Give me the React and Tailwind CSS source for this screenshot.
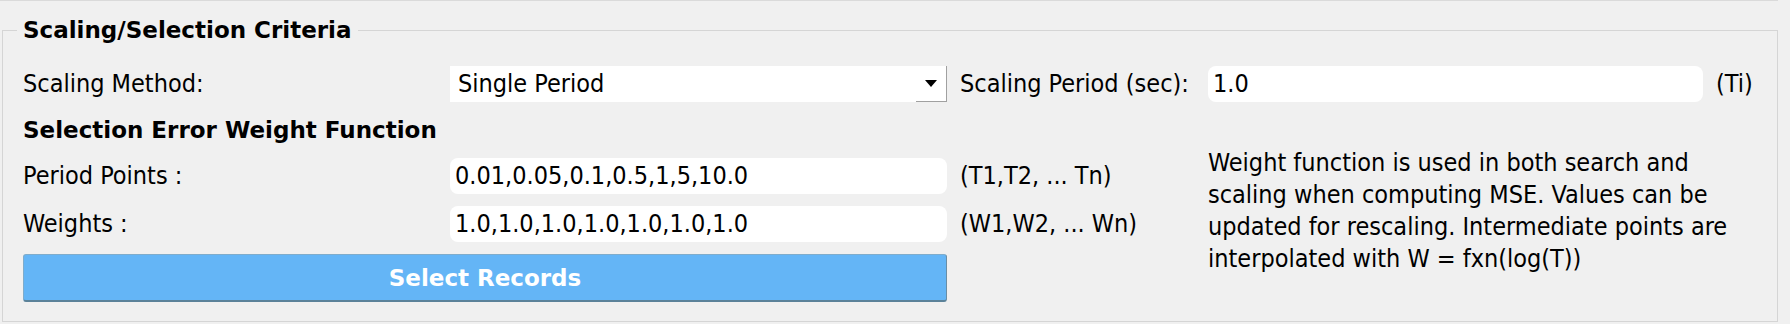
const inputCls = 'h-full w-full bg-white rounded-[8px] pl-[5px] flex items-center';

function Field({ value, className = '' }) {
  return <div className={inputCls + ' ' + className}>{value}</div>;
}

function Combo({ value }) {
  return (
    <div className="col-start-2 row-start-1 h-full w-full bg-white flex items-center">
      <div className="flex-1 pl-[8px]">{value}</div>
      <div className="h-full w-[31px] border-r border-b border-[#a0a0a0] flex items-center justify-center">
        <svg width="12" height="7" viewBox="0 0 12 7"><path d="M0 0h12L6 7z" fill="#000" /></svg>
      </div>
    </div>
  );
}

const bold = "font-bold text-[23px] font-['DejaVu_Sans',sans-serif]";

export default function App() {
  return (
    <div className="w-[1790px] h-[324px] bg-[#f0f0f0] text-black text-[25px] font-['DejaVu_Sans_Condensed','Liberation_Sans',sans-serif]">
      <div className="w-[1778px] border-t border-[#dadada] pt-[12px] pl-[2px]">
        <fieldset className="border border-[#d5d5d5] pb-[19px]">
          <legend className={'ml-[14px] px-[6px] leading-[34px] ' + bold}>Scaling/Selection Criteria</legend>
          <div className="mt-[19px] ml-[20px] grid grid-cols-[414px_497px_235px_495px_1fr] grid-rows-[36px_32px_36px_36px_48px] gap-x-[13px] gap-y-3 items-center leading-[30px]">
            <div className="col-start-1 row-start-1">Scaling Method:</div>
            <Combo value="Single Period" />
            <div className="col-start-3 row-start-1 whitespace-nowrap">Scaling Period (sec):</div>
            <Field className="col-start-4 row-start-1" value="1.0" />
            <div className="col-start-5 row-start-1">(Ti)</div>

            <div className={'col-start-1 row-start-2 col-span-2 whitespace-nowrap ' + bold}>Selection Error Weight Function</div>
            <div className="col-start-4 col-span-2 row-start-2 row-span-4 self-center pt-[5px] leading-[32px] whitespace-nowrap">
              Weight function is used in both search and<br />
              scaling when computing MSE. Values can be<br />
              updated for rescaling. Intermediate points are<br />
              interpolated with W = fxn(log(T))
            </div>

            <div className="col-start-1 row-start-3">Period Points :</div>
            <Field className="col-start-2 row-start-3" value="0.01,0.05,0.1,0.5,1,5,10.0" />
            <div className="col-start-3 row-start-3 whitespace-nowrap">(T1,T2, ... Tn)</div>

            <div className="col-start-1 row-start-4">Weights :</div>
            <Field className="col-start-2 row-start-4" value="1.0,1.0,1.0,1.0,1.0,1.0,1.0" />
            <div className="col-start-3 row-start-4 whitespace-nowrap">(W1,W2, ... Wn)</div>

            <button className={'col-start-1 row-start-5 col-span-2 h-full bg-[#64b5f6] text-white rounded-[3px] border border-[#7faccb] border-b-2 border-b-[#5b8299] border-r-[#6a8ea5] ' + bold}>
              Select Records
            </button>
          </div>
        </fieldset>
      </div>
    </div>
  );
}
